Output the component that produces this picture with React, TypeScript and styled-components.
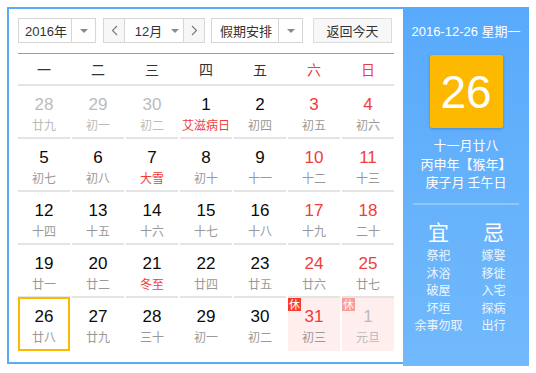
import React from "react";
import styled, { createGlobalStyle, css } from "styled-components";

const GlobalStyle = createGlobalStyle`
  html, body { margin: 0; padding: 0; background: #fff; }
  body { font-family: "Liberation Sans", "Noto Sans CJK SC", sans-serif; }
  * { box-sizing: border-box; }
`;

const BLUE = "#5aabfb";
const RED = "#f03c3c";

const Page = styled.div`
  padding: 7px;
`;

const Widget = styled.div`
  display: flex;
  align-items: flex-start;
  width: 522px;
`;

const Main = styled.div`
  width: 396px;
  border: 2px solid ${BLUE};
  border-right: none;
  padding: 9px 9px 11px 9px;
  background: #fff;
`;

const Toolbar = styled.div`
  display: flex;
  align-items: stretch;
  height: 25px;
  font-family: "Liberation Sans", "Noto Sans CJK SC", sans-serif;
  font-size: 13px;
  color: #333;
`;

const Select = styled.div<{ $w: number; $ml?: number }>`
  display: flex;
  width: ${(p) => p.$w}px;
  margin-left: ${(p) => p.$ml ?? 0}px;
  border: 1px solid #d6d6d6;
  background: #fff;
`;

const SelectText = styled.div`
  flex: 1;
  display: flex;
  align-items: center;
  justify-content: center;
  border-right: 1px solid #d6d6d6;
  padding-left: 2px;
`;

const SelectArrow = styled.div`
  width: 23px;
  display: flex;
  align-items: center;
  justify-content: center;
`;

const Caret = styled.span`
  width: 0;
  height: 0;
  border-left: 4px solid transparent;
  border-right: 4px solid transparent;
  border-top: 4px solid #8a8a8a;
`;

const MonthGroup = styled.div`
  display: flex;
  margin-left: 7px;
  border: 1px solid #d6d6d6;
  width: 102px;
`;

const NavBtn = styled.div<{ $side: "l" | "r" }>`
  width: 21px;
  display: flex;
  align-items: center;
  justify-content: center;
  background: #f7f7f7;
  ${(p) =>
    p.$side === "l"
      ? css`border-right: 1px solid #d6d6d6;`
      : css`border-left: 1px solid #d6d6d6;`}
`;

const MonthField = styled.div`
  flex: 1;
  display: flex;
  align-items: center;
  justify-content: center;
  gap: 9px;
  padding-left: 6px;
  background: #fff;
`;

const TodayBtn = styled.div`
  margin-left: 10px;
  width: 79px;
  display: flex;
  align-items: center;
  justify-content: center;
  border: 1px solid #dcdcdc;
  background: #f7f7f7;
`;

const WeekHeader = styled.div`
  margin-top: 10px;
  display: grid;
  grid-template-columns: repeat(7, 52px);
  column-gap: 2px;
  height: 33px;
  border-top: 1px solid ${BLUE};
  border-bottom: 2px solid #e4e4e4;
  font-family: "Noto Sans CJK SC", sans-serif;
  font-size: 14px;
`;

const WeekDay = styled.div<{ $weekend?: boolean }>`
  display: flex;
  align-items: center;
  justify-content: center;
  color: ${(p) => (p.$weekend ? RED : "#333")};
`;

const Grid = styled.div`
  display: grid;
  grid-template-columns: repeat(7, 52px);
  grid-auto-rows: 53px;
  column-gap: 2px;
`;

const Cell = styled.div<{ $last: boolean; $holiday?: boolean; $today?: boolean }>`
  position: relative;
  display: flex;
  flex-direction: column;
  align-items: center;
  padding-top: 9px;
  border-bottom: ${(p) => (p.$last ? "none" : "2px solid #e4e4e4")};
  background: ${(p) => (p.$holiday ? "#ffeeee" : "transparent")};
  ${(p) =>
    p.$today &&
    css`
      &::after {
        content: "";
        position: absolute;
        left: 0;
        right: 0;
        top: -1px;
        bottom: 0;
        border: 2px solid #fdb800;
      }
    `}
`;

const DayNum = styled.div<{ $tone: "normal" | "muted" | "red" }>`
  font-family: "Liberation Sans", sans-serif;
  font-size: 17px;
  line-height: 20px;
  color: ${(p) =>
    p.$tone === "muted" ? "#bbbbbb" : p.$tone === "red" ? RED : "#0a0a0a"};
`;

const Lunar = styled.div<{ $tone: "normal" | "muted" | "red" }>`
  margin-top: 2px;
  font-family: "Noto Sans CJK SC", sans-serif;
  font-size: 12px;
  line-height: 16px;
  white-space: nowrap;
  color: ${(p) =>
    p.$tone === "muted" ? "#bbbbbb" : p.$tone === "red" ? RED : "#999"};
`;

const Badge = styled.span<{ $faded?: boolean }>`
  position: absolute;
  left: 0;
  top: 0;
  width: 13px;
  height: 13px;
  display: flex;
  align-items: center;
  justify-content: center;
  background: #f53d2d;
  opacity: ${(p) => (p.$faded ? 0.45 : 1)};
  color: #fff;
  font-family: "Noto Sans CJK SC", sans-serif;
  font-size: 11px;
  line-height: 13px;
`;

const Panel = styled.div`
  width: 126px;
  height: 359px;
  background: linear-gradient(180deg, #58aafb 0%, #72b9fc 100%);
  color: #fff;
  display: flex;
  flex-direction: column;
  align-items: center;
  padding-top: 16px;
  font-family: "Liberation Sans", "Noto Sans CJK SC", sans-serif;
  font-size: 13px;
`;

const PanelDate = styled.div`
  line-height: 18px;
  white-space: nowrap;
`;

const BigDay = styled.div`
  margin-top: 14px;
  width: 73px;
  height: 73px;
  background: #fdb900;
  border-radius: 2px;
  box-shadow: 0 1px 3px rgba(0, 60, 140, 0.3);
  display: flex;
  align-items: center;
  justify-content: center;
  font-family: "Liberation Sans", sans-serif;
  font-size: 46px;
  color: #fff;
`;

const LunarInfo = styled.div`
  margin-top: 8px;
  display: flex;
  flex-direction: column;
  align-items: center;
  line-height: 18.5px;
  font-family: "Noto Sans CJK SC", sans-serif;
  white-space: nowrap;
`;

const Divider = styled.div`
  margin-top: 11px;
  width: 106px;
  height: 2px;
  background: #8fc7fd;
`;

const Almanac = styled.div`
  margin-top: 11px;
  display: grid;
  grid-template-columns: 55px 55px;
  font-family: "Noto Sans CJK SC", sans-serif;
`;

const AlmanacCol = styled.div`
  display: flex;
  flex-direction: column;
  align-items: center;
`;

const AlmanacHead = styled.div`
  font-size: 21px;
  line-height: 30.5px;
`;

const AlmanacItem = styled.div`
  font-size: 12px;
  line-height: 17.5px;
  white-space: nowrap;
  color: #eef6ff;
`;

const Chevron = ({ dir }: { dir: "l" | "r" }) => (
  <svg width="7" height="11" viewBox="0 0 7 11">
    <path
      d={dir === "l" ? "M6 1 L1.5 5.5 L6 10" : "M1 1 L5.5 5.5 L1 10"}
      fill="none"
      stroke="#777"
      strokeWidth="1.1"
    />
  </svg>
);

type Tone = "normal" | "muted" | "red";
type Day = {
  n: number;
  lunar: string;
  num?: Tone;
  lun?: Tone;
  holiday?: "on" | "faded";
  today?: boolean;
};

const weekdays = ["一", "二", "三", "四", "五", "六", "日"];

const days: Day[] = [
  { n: 28, lunar: "廿九", num: "muted", lun: "muted" },
  { n: 29, lunar: "初一", num: "muted", lun: "muted" },
  { n: 30, lunar: "初二", num: "muted", lun: "muted" },
  { n: 1, lunar: "艾滋病日", lun: "red" },
  { n: 2, lunar: "初四" },
  { n: 3, lunar: "初五", num: "red" },
  { n: 4, lunar: "初六", num: "red" },
  { n: 5, lunar: "初七" },
  { n: 6, lunar: "初八" },
  { n: 7, lunar: "大雪", lun: "red" },
  { n: 8, lunar: "初十" },
  { n: 9, lunar: "十一" },
  { n: 10, lunar: "十二", num: "red" },
  { n: 11, lunar: "十三", num: "red" },
  { n: 12, lunar: "十四" },
  { n: 13, lunar: "十五" },
  { n: 14, lunar: "十六" },
  { n: 15, lunar: "十七" },
  { n: 16, lunar: "十八" },
  { n: 17, lunar: "十九", num: "red" },
  { n: 18, lunar: "二十", num: "red" },
  { n: 19, lunar: "廿一" },
  { n: 20, lunar: "廿二" },
  { n: 21, lunar: "冬至", lun: "red" },
  { n: 22, lunar: "廿四" },
  { n: 23, lunar: "廿五" },
  { n: 24, lunar: "廿六", num: "red" },
  { n: 25, lunar: "廿七", num: "red" },
  { n: 26, lunar: "廿八", today: true },
  { n: 27, lunar: "廿九" },
  { n: 28, lunar: "三十" },
  { n: 29, lunar: "初一" },
  { n: 30, lunar: "初二" },
  { n: 31, lunar: "初三", num: "red", holiday: "on" },
  { n: 1, lunar: "元旦", num: "muted", lun: "muted", holiday: "faded" },
];

const yi = ["祭祀", "沐浴", "破屋", "坏垣", "余事勿取"];
const ji = ["嫁娶", "移徙", "入宅", "探病", "出行"];

export default function App() {
  return (
    <>
      <GlobalStyle />
      <Page>
        <Widget>
          <Main>
            <Toolbar>
              <Select $w={78}>
                <SelectText>2016年</SelectText>
                <SelectArrow>
                  <Caret />
                </SelectArrow>
              </Select>
              <MonthGroup>
                <NavBtn $side="l">
                  <Chevron dir="l" />
                </NavBtn>
                <MonthField>
                  <span>12月</span>
                  <Caret />
                </MonthField>
                <NavBtn $side="r">
                  <Chevron dir="r" />
                </NavBtn>
              </MonthGroup>
              <Select $w={92} $ml={6}>
                <SelectText>假期安排</SelectText>
                <SelectArrow>
                  <Caret />
                </SelectArrow>
              </Select>
              <TodayBtn>返回今天</TodayBtn>
            </Toolbar>
            <WeekHeader>
              {weekdays.map((w, i) => (
                <WeekDay key={w} $weekend={i >= 5}>
                  {w}
                </WeekDay>
              ))}
            </WeekHeader>
            <Grid>
              {days.map((d, i) => (
                <Cell
                  key={i}
                  $last={i >= 28}
                  $holiday={!!d.holiday}
                  $today={d.today}
                >
                  {d.holiday && <Badge $faded={d.holiday === "faded"}>休</Badge>}
                  <DayNum $tone={d.num ?? "normal"}>{d.n}</DayNum>
                  <Lunar $tone={d.lun ?? "normal"}>{d.lunar}</Lunar>
                </Cell>
              ))}
            </Grid>
          </Main>
          <Panel>
            <PanelDate>2016-12-26 星期一</PanelDate>
            <BigDay>26</BigDay>
            <LunarInfo>
              <span>十一月廿八</span>
              <span>丙申年【猴年】</span>
              <span>庚子月 壬午日</span>
            </LunarInfo>
            <Divider />
            <Almanac>
              <AlmanacCol>
                <AlmanacHead>宜</AlmanacHead>
                {yi.map((t) => (
                  <AlmanacItem key={t}>{t}</AlmanacItem>
                ))}
              </AlmanacCol>
              <AlmanacCol>
                <AlmanacHead>忌</AlmanacHead>
                {ji.map((t) => (
                  <AlmanacItem key={t}>{t}</AlmanacItem>
                ))}
              </AlmanacCol>
            </Almanac>
          </Panel>
        </Widget>
      </Page>
    </>
  );
}
